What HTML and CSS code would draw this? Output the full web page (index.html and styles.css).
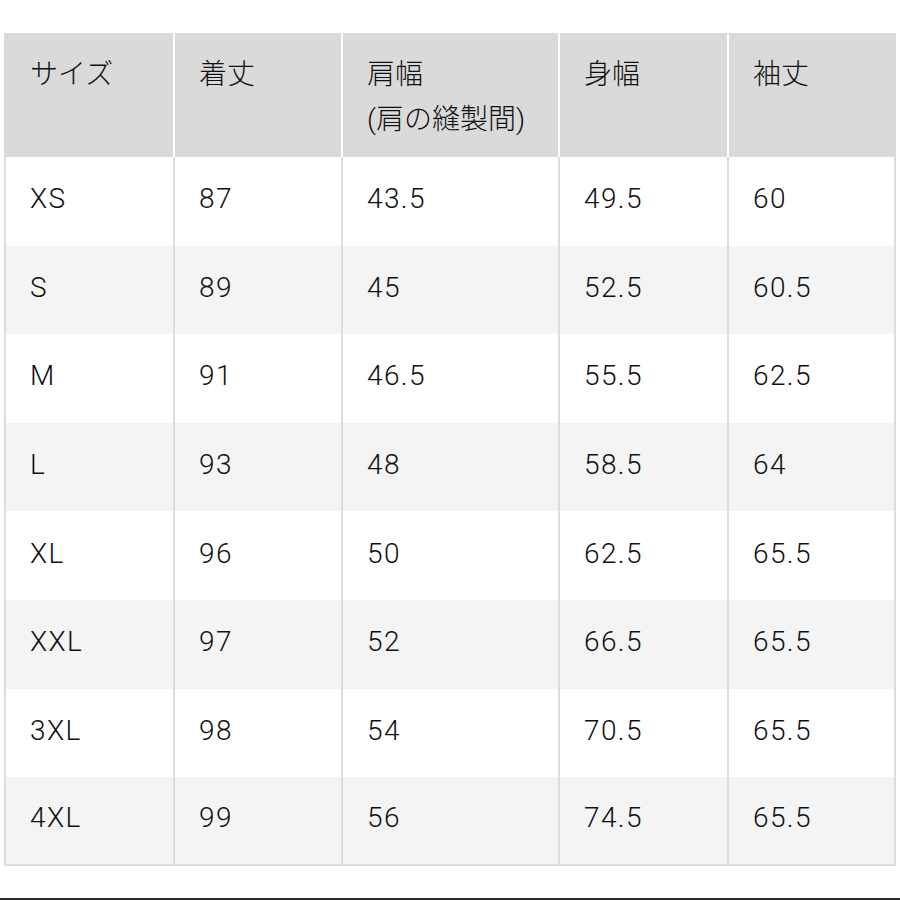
FILE: index.html
```html
<!DOCTYPE html>
<html lang="ja">
<head>
<meta charset="utf-8">
<link rel="stylesheet" href="styles.css">
</head>
<body>
<div class="page">
<table class="sizes">
<colgroup>
<col class="c1"><col class="c2"><col class="c3"><col class="c4"><col class="c5">
</colgroup>
<thead>
<tr><th>サイズ</th><th>着丈</th><th>肩幅<br>(肩の縫製間)</th><th>身幅</th><th>袖丈</th></tr>
</thead>
<tbody>
<tr><td>XS</td><td>87</td><td>43.5</td><td>49.5</td><td>60</td></tr>
<tr><td>S</td><td>89</td><td>45</td><td>52.5</td><td>60.5</td></tr>
<tr><td>M</td><td>91</td><td>46.5</td><td>55.5</td><td>62.5</td></tr>
<tr><td>L</td><td>93</td><td>48</td><td>58.5</td><td>64</td></tr>
<tr><td>XL</td><td>96</td><td>50</td><td>62.5</td><td>65.5</td></tr>
<tr><td>XXL</td><td>97</td><td>52</td><td>66.5</td><td>65.5</td></tr>
<tr><td>3XL</td><td>98</td><td>54</td><td>70.5</td><td>65.5</td></tr>
<tr><td>4XL</td><td>99</td><td>56</td><td>74.5</td><td>65.5</td></tr>
</tbody>
</table>
<div class="rule"></div>
</div>
</body>
</html>
```
FILE: styles.css
```css
html, body {
  margin: 0;
  padding: 0;
  background: #fff;
}
.page {
  width: 900px;
  height: 900px;
  padding-top: 33px;
  box-sizing: border-box;
  position: relative;
  font-family: Roboto, "Noto Sans CJK JP", sans-serif;
  font-weight: 300;
  color: #111;
}
.sizes {
  margin-left: 4px;
  width: 892px;
  table-layout: fixed;
  border-collapse: separate;
  border-spacing: 0;
  font-size: 28px;
}
.c1 { width: 169px; }
.c2 { width: 168px; }
.c3 { width: 217px; }
.c4 { width: 169px; }
.c5 { width: 169px; }
.sizes th {
  height: 124px;
  box-sizing: border-box;
  background: #dadada;
  border-left: 2px solid #fff;
  text-align: left;
  vertical-align: top;
  font-weight: 300;
  line-height: 45px;
  padding: 19px 0 0 24px;
}
.sizes th:first-child {
  border-left: 2px solid #dadada;
}
.sizes td {
  height: 88.6px;
  box-sizing: border-box;
  border-left: 2px solid #dcdcdc;
  padding: 0 0 4px 24px;
  vertical-align: middle;
  line-height: 32px;
  letter-spacing: 1.4px;
  background: #fff;
}
.sizes td:last-child {
  border-right: 2px solid #dcdcdc;
}
.sizes tbody tr:nth-child(even) td {
  background: #f4f4f4;
}
.sizes tbody tr:last-child td {
  border-bottom: 2px solid #dcdcdc;
}
.rule {
  position: absolute;
  left: 0;
  right: 0;
  bottom: 0;
  height: 2px;
  background: #2a2a2a;
}
```
